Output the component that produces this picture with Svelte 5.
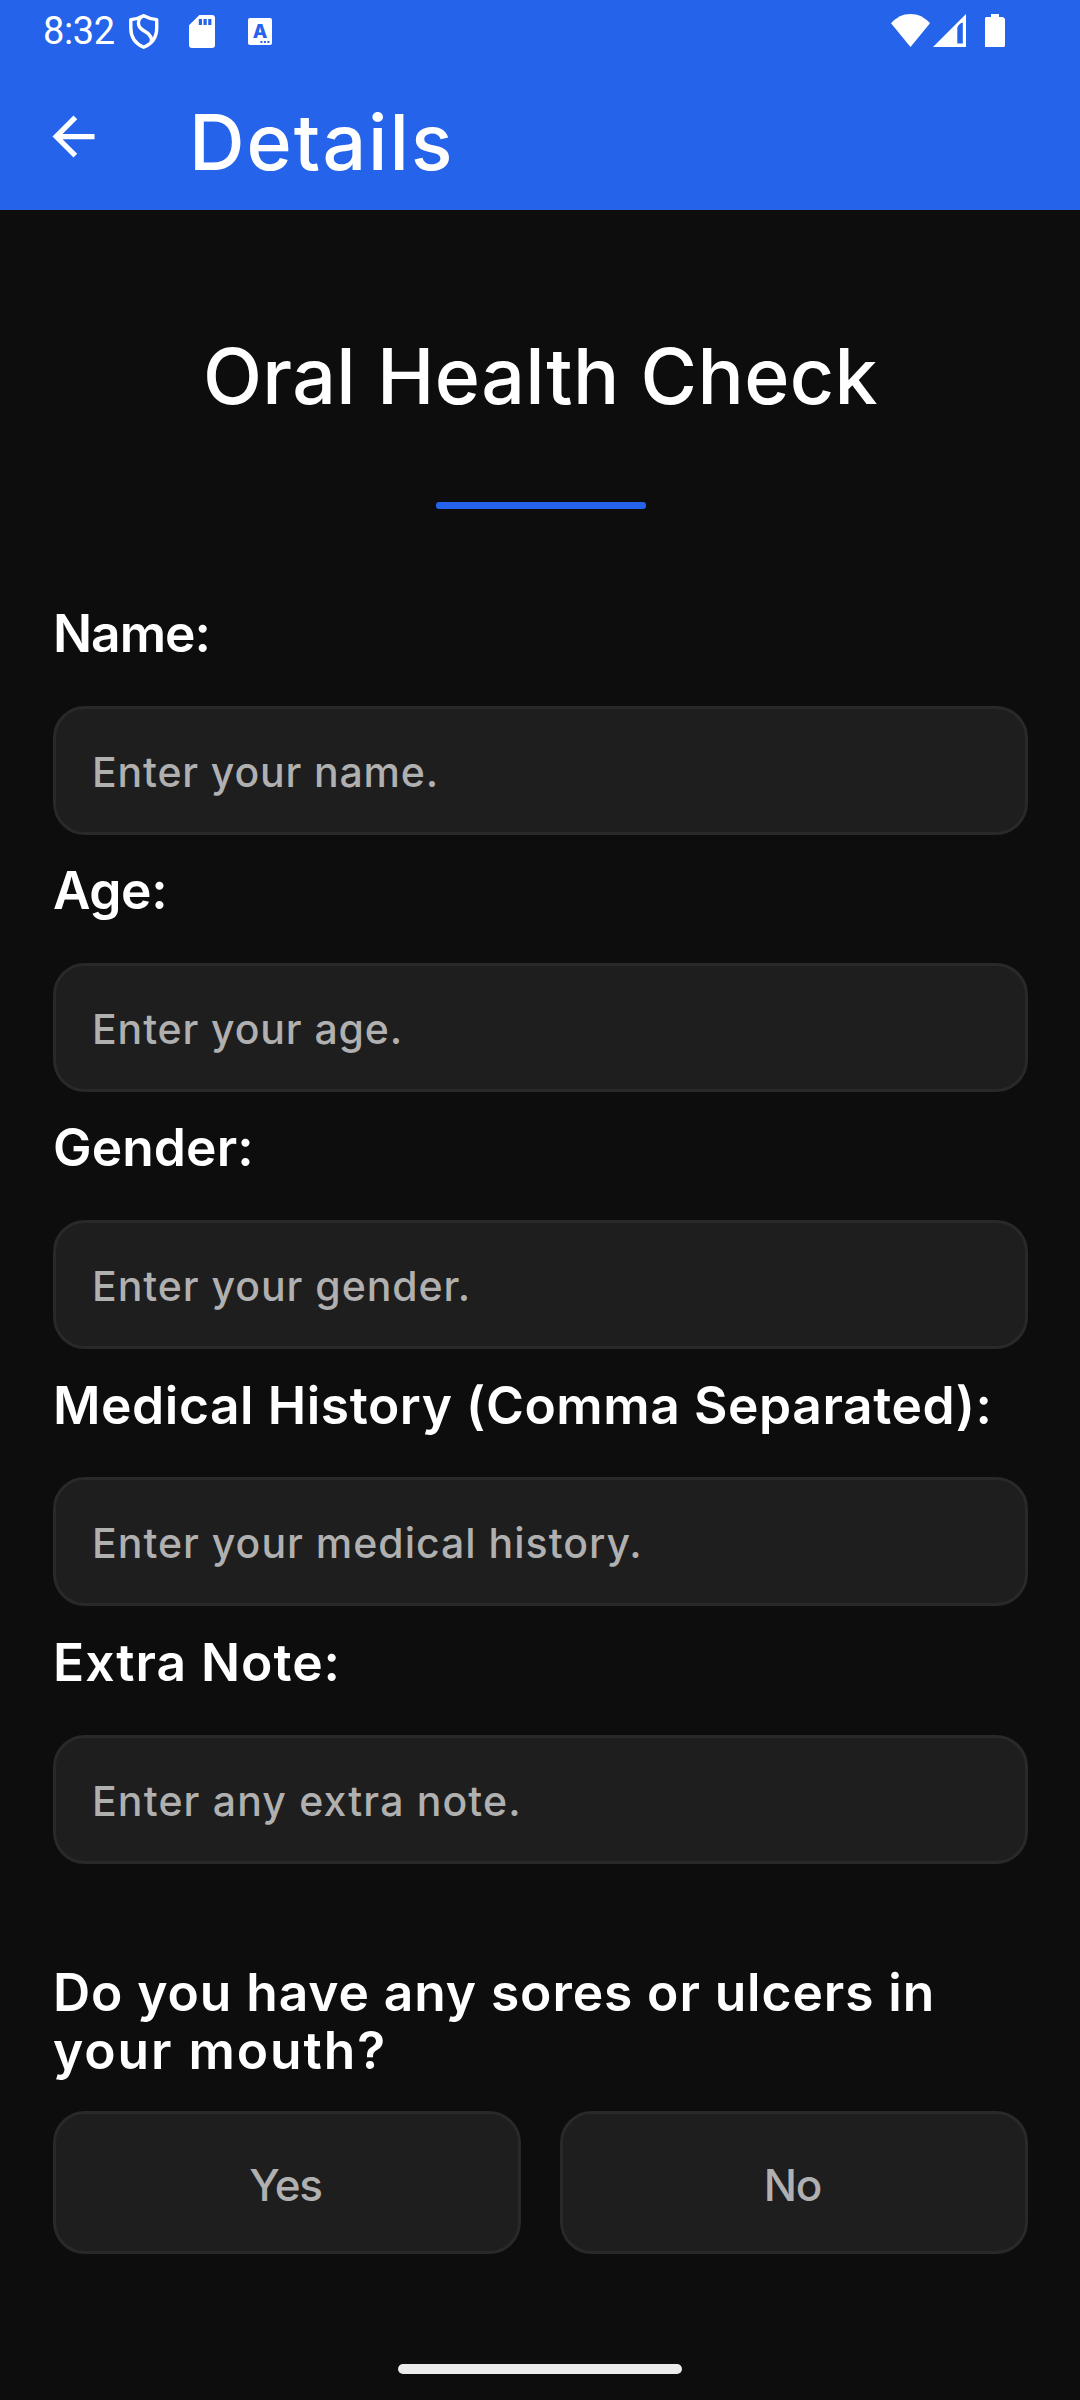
<script>
  // tracking values are letter-spacing in px for the label and the placeholder
  const fields = [
    { id: 'name', label: 'Name:', labelTracking: -1, hint: 'Enter your name.', hintTracking: 0.83 },
    { id: 'age', label: 'Age:', labelTracking: -0.4, hint: 'Enter your age.', hintTracking: 0.87 },
    { id: 'gender', label: 'Gender:', labelTracking: 0.1, hint: 'Enter your gender.', hintTracking: 0.95 },
    {
      id: 'history',
      label: 'Medical History (Comma Separated):',
      labelTracking: 0.58,
      hint: 'Enter your medical history.',
      hintTracking: 1
    },
    { id: 'note', label: 'Extra Note:', labelTracking: 1, hint: 'Enter any extra note.', hintTracking: 1.15 }
  ];

  const question = [
    { text: 'Do you have any sores or ulcers in', tracking: 0.92 },
    { text: 'your mouth?', tracking: 1.95 }
  ];

  const answers = ['Yes', 'No'];
  let selected = $state(null);
</script>

<div class="screen">
  <header class="top">
    <div class="status">
      <span class="clock">8:32</span>
      <svg class="shield" width="30" height="35" viewBox="0 0 30 35" fill="none" stroke="#fff" stroke-width="3.4" stroke-linejoin="round">
        <path d="M14.7 1.7 C11 3.8 6.5 5.2 1.8 5.6 V14 C1.8 23 6.5 29.8 14.7 33.3 C23 29.8 27.7 23 27.7 14 V5.6 C23 5.2 18.5 3.8 14.7 1.7 Z" />
        <path d="M13.5 2.2 C9.6 4.4 9 8.5 9.8 11.4 C11 16.2 16.5 16.7 20.1 20.6 C22.3 23 23 25.4 22.3 28.4" />
      </svg>
      <svg class="card" width="26" height="35" viewBox="0 0 26 35">
        <path
          fill="#fff"
          fill-rule="evenodd"
          d="M10.4 1 H23 A3 3 0 0 1 26 4 V31 A3 3 0 0 1 23 34 H3 A3 3 0 0 1 0 31 V11.2 Z M9.8 5 V11 H13 V5 Z M14.5 5 V11 H17.7 V5 Z M19.2 5 V11 H22.4 V5 Z"
        />
      </svg>
      <svg class="letter" width="24" height="35" viewBox="0 0 24 35">
        <rect x="0" y="4" width="24" height="27" rx="2" fill="#fff" />
        <text x="12" y="24" text-anchor="middle">A</text>
        <path fill="#2563eb" d="M12.4 27h2v2h-2zM15.9 27h2v2h-2zM19.4 27h2v2h-2z" />
      </svg>
      <svg class="wifi" width="39" height="35" viewBox="0 0 39 35">
        <path fill="#fff" d="M0 9.2 C5.5 3.2 12 0 19.5 0 S33.5 3.2 39 9.2 L19.5 33 Z" />
      </svg>
      <svg class="signal" width="33" height="35" viewBox="0 0 33 35">
        <path fill="#fff" fill-rule="evenodd" d="M0 33 L33 0 V33 Z M24.3 13.4 V29.4 H29.8 V8.6 C27.5 9 25.5 11 24.3 13.4 Z" />
      </svg>
      <svg class="battery" width="20" height="35" viewBox="0 0 20 35">
        <path fill="#fff" d="M6 0 H14 V3 H18 L20 5 V32 L19 33 H0 V4 L1 3 H6 Z" />
      </svg>
    </div>
    <div class="bar">
      <svg class="back" width="63" height="63" viewBox="0 0 24 24" fill="#fff">
        <path d="M20 11H7.83l5.59-5.59L12 4l-8 8 8 8 1.41-1.41L7.83 13H20v-2z" />
      </svg>
      <h1>Details</h1>
    </div>
  </header>

  <main class="content">
    <h2>Oral Health Check</h2>
    <div class="divider"></div>

    {#each fields as field (field.id)}
      <div class="field">
        <label for={field.id} style:letter-spacing="{field.labelTracking}px">{field.label}</label>
        <input id={field.id} placeholder={field.hint} style:letter-spacing="{field.hintTracking}px" />
      </div>
    {/each}

    <p class="question">
      {#each question as line}
        <span style:letter-spacing="{line.tracking}px">{line.text}</span>
      {/each}
    </p>

    <div class="answers">
      {#each answers as answer}
        <button type="button" aria-pressed={selected === answer} onclick={() => (selected = answer)}>{answer}</button>
      {/each}
    </div>
  </main>

  <div class="home"></div>
</div>

<style>
  :global(body) {
    background: #0d0d0d;
  }

  .screen {
    display: flex;
    flex-direction: column;
    width: 1080px;
    height: 2400px;
    overflow: hidden;
    background: #0d0d0d;
    color: #fff;
    font-family: Inter, 'Liberation Sans', sans-serif;
    font-weight: 500;
  }

  svg {
    display: block;
    flex: none;
  }

  .top {
    height: 210px;
    background: #2563eb;
  }

  .status {
    box-sizing: border-box;
    display: flex;
    align-items: flex-start;
    height: 63px;
    padding: 14px 75px 0 43px;
  }

  .clock {
    width: 86px;
    font: 400 38px/34px Roboto, sans-serif;
    letter-spacing: -0.4px;
  }

  .card {
    margin-left: 30px;
  }

  .letter {
    margin-left: 33px;
  }

  .letter text {
    fill: #2563eb;
    font: 800 19px Inter, sans-serif;
  }

  .wifi {
    margin-left: auto;
  }

  .signal {
    margin-left: 3px;
  }

  .battery {
    margin-left: 19px;
  }

  .bar {
    display: flex;
    align-items: center;
    height: 147px;
    padding-left: 42px;
  }

  h1 {
    margin: 0 0 0 84px;
    padding-top: 10px;
    font-size: 77px;
    font-weight: 500;
    line-height: 100px;
    letter-spacing: 2px;
  }

  .content {
    display: flex;
    flex-direction: column;
    padding: 106px 52px 0 53px;
  }

  h2 {
    margin: 0;
    font-size: 77px;
    font-weight: 500;
    line-height: 120px;
    letter-spacing: 0.4px;
    text-align: center;
  }

  .divider {
    width: 210px;
    height: 7px;
    margin: 66px 0 69px 383px;
    border-radius: 3px;
    background: #2563eb;
  }

  .field {
    display: flex;
    flex-direction: column;
    height: 257.2px;
  }

  label {
    height: 127.8px;
    font-size: 51.5px;
    font-weight: 600;
    line-height: 111px;
    white-space: nowrap;
  }

  input {
    box-sizing: border-box;
    width: 100%;
    height: 129px;
    margin: 0;
    padding: 3px 36px 0;
    border: 3px solid #292929;
    border-radius: 32px;
    outline: none;
    background: #1e1e1e;
    color: #fff;
    font: inherit;
    font-size: 41px;
  }

  input::placeholder {
    color: #b0b0b0;
    opacity: 1;
  }

  .question {
    margin: 99px 0 0;
    font-size: 51.5px;
    font-weight: 600;
    line-height: 58px;
  }

  .question span {
    display: block;
    white-space: nowrap;
  }

  .answers {
    display: grid;
    grid-template-columns: 1fr 1fr;
    gap: 39px;
    margin-top: 32px;
  }

  button {
    height: 143px;
    margin: 0;
    padding: 6px 3px 0 0;
    border: 3px solid #292929;
    border-radius: 32px;
    background: #1e1e1e;
    color: #b0b0b0;
    font: inherit;
    font-size: 44px;
    letter-spacing: -1.2px;
  }

  .home {
    width: 284px;
    height: 10px;
    margin: auto auto 26px;
    border-radius: 5px;
    background: #ebebeb;
  }
</style>
